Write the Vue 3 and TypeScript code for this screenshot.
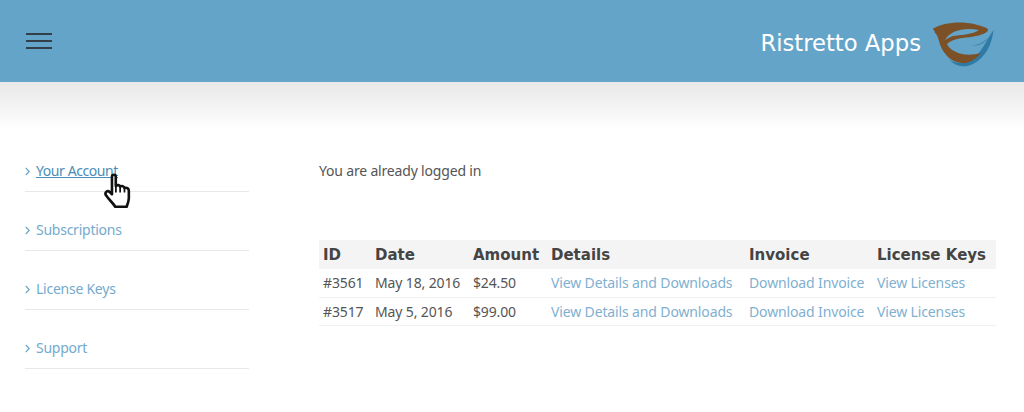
<script setup lang="ts">
interface Order { id: string; date: string; amount: string }
const navItems: string[] = ['Your Account', 'Subscriptions', 'License Keys', 'Support']
const orders: Order[] = [
  { id: '#3561', date: 'May 18, 2016', amount: '$24.50' },
  { id: '#3517', date: 'May 5, 2016', amount: '$99.00' },
]
</script>

<template>
  <div class="page">
    <header class="topbar">
      <div class="burger"><span></span><span></span><span></span></div>
      <div class="brand">
        <span class="brand-name">Ristretto Apps</span>
        <svg class="logo" width="62" height="46" viewBox="8 7 62 46" aria-hidden="true">
          <path d="M68.500 15 C67 30 60 43 48 49 C40 53 30 52 24 44 C31 50 42 48 50 42 C58 35 62 24 68.500 15 Z" fill="#2f7ba5"/>
          <path d="M46 31 C53 30 60 27 66 20 C61 28 54 31 46 31 Z" fill="#3f84ac"/>
          <path d="M7.500 14 C20 6 45 5 63 14 C64 19 50 22 37 23 C30 24 25 26 22 29 C25 36 38 43 56 38 C50 45 43 49 36 48 C26 47 20 40 16 32 C14 27 13 20 10 18 C9.500 16 9 15 7.500 14 Z M20 25 C25 16 38 12 54 15 C46 20 35 20 28 21 C25 22 23 23 20 25 Z" fill="#7d5128" fill-rule="evenodd"/>
        </svg>
      </div>
    </header>
    <div class="fade"></div>
    <div class="content">
      <nav class="sidebar">
        <div v-for="(item, i) in navItems" :key="item" class="nav-item">
          <svg class="chev" width="5" height="9" viewBox="0 0 5 9" aria-hidden="true"><path d="M0.700 0.800 L4.200 4.500 L0.700 8.200" fill="none" stroke="#67a3c9" stroke-width="1.200"/></svg>
          <a class="nav-link" :class="{ active: i === 0 }" href="#">{{ item }}</a>
          <svg v-if="i === 0" class="cursor" width="33" height="37" viewBox="0 0 30 34" aria-hidden="true">
            <path d="M9 3.500 C9 1 12.500 1 12.500 3.500 L12.500 12 C14 10.500 16 11 16.500 12.500 C18 11.500 20 12 20.500 13.800 C22.500 13 24.500 14 24.500 16.500 L24.500 23 C24.500 26 23.500 28 22.500 31 L12 31 C10 27.500 7 25.500 3.500 20.500 C2 18 4.500 15.500 7 17.500 L9 19.500 Z" fill="#fff" stroke="#111" stroke-width="2.400" stroke-linejoin="round"/>
            <path d="M12.600 12 L12.600 18 M16.500 12.500 L16.500 18 M20.500 13.800 L20.500 18" stroke="#111" stroke-width="1.600" fill="none"/>
          </svg>
        </div>
      </nav>
      <main class="main">
        <p class="status">You are already logged in</p>
        <table class="orders">
          <colgroup>
            <col class="c-id" /><col class="c-date" /><col class="c-amount" />
            <col class="c-details" /><col class="c-invoice" /><col class="c-keys" />
          </colgroup>
          <thead>
            <tr><th>ID</th><th>Date</th><th>Amount</th><th>Details</th><th>Invoice</th><th>License Keys</th></tr>
          </thead>
          <tbody>
            <tr v-for="o in orders" :key="o.id">
              <td>{{ o.id }}</td>
              <td>{{ o.date }}</td>
              <td>{{ o.amount }}</td>
              <td><a href="#">View Details and Downloads</a></td>
              <td><a href="#">Download Invoice</a></td>
              <td><a href="#">View Licenses</a></td>
            </tr>
          </tbody>
        </table>
      </main>
    </div>
  </div>
</template>

<style>
html, body { margin: 0; background: #fff; overflow: hidden; }
</style>

<style scoped>
.page { width: 1024px; height: 412px; overflow: hidden; background: #fff; font-family: "Noto Sans", "Liberation Sans", sans-serif; font-size: 14px; color: #555; }
.topbar { height: 82px; background: #65a4c9; display: flex; align-items: center; justify-content: space-between; padding: 0 29px 0 26px; box-sizing: border-box; }
.burger { display: flex; flex-direction: column; gap: 5px; width: 26px; margin-top: -1px; }
.burger span { display: block; height: 2px; background: #333f48; }
.brand { display: flex; align-items: center; gap: 12px; }
.brand-name { font-family: "DejaVu Sans", sans-serif; font-size: 22.700px; color: #fff; margin-top: 4px; }
.logo { display: block; margin-top: 7px; }
.fade { height: 48px; background: linear-gradient(#e8e8e8, #fff); }
.content { display: flex; padding: 21px 28px 0 25px; }
.sidebar { width: 224px; flex: none; }
.nav-item { position: relative; display: flex; align-items: center; gap: 6px; height: 40px; margin-bottom: 18px; border-bottom: 1px solid #e8e8e8; }
.nav-link { color: #74aacd; text-decoration: none; font-size: 14px; letter-spacing: -0.250px; margin-top: -2px; }
.nav-link.active { color: #4b8db8; text-decoration: underline; letter-spacing: -0.420px; }
.cursor { position: absolute; left: 77px; top: 22px; }
.main { margin-left: 70px; flex: 1; }
.status { margin: 0; height: 89px; line-height: 39px; letter-spacing: -0.180px; }
.orders { width: 677px; table-layout: fixed; border-collapse: separate; border-spacing: 0; }
.c-id { width: 52px; } .c-date { width: 98px; } .c-amount { width: 78px; }
.c-details { width: 198px; } .c-invoice { width: 128px; } .c-keys { width: 123px; }
th { height: 29px; padding: 0 4px; background: #f4f4f4; text-align: left; font-family: "DejaVu Sans", sans-serif; font-size: 15px; font-weight: 700; color: #444; white-space: nowrap; }
td { height: 28.500px; padding: 0 4px; box-sizing: border-box; border-bottom: 1px solid #f0f0f0; letter-spacing: -0.135px; white-space: nowrap; }
td a { color: #7fb0d0; text-decoration: none; }
</style>
